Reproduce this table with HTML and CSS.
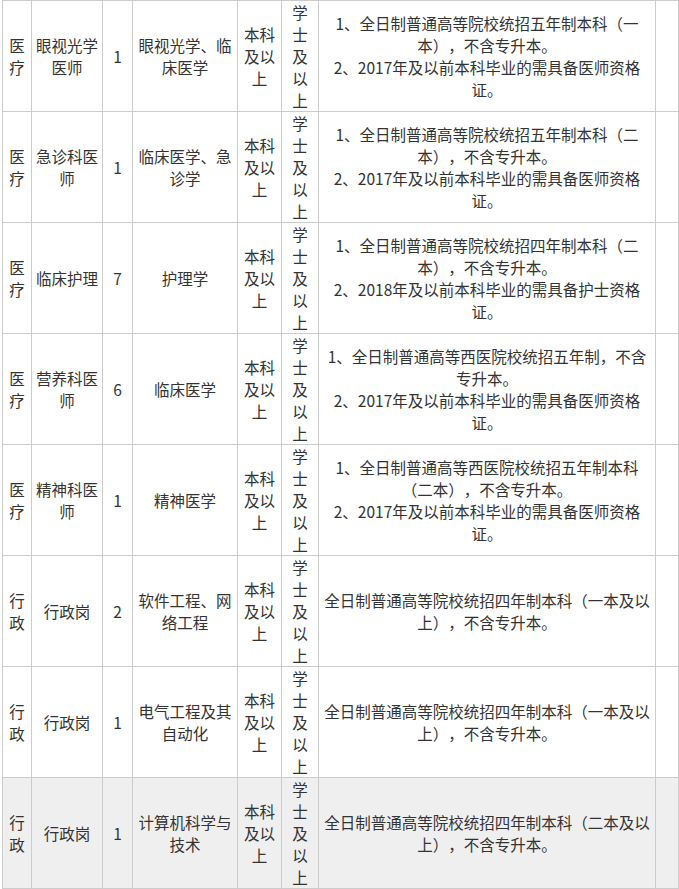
FILE: index.html
```html
<!DOCTYPE html>
<html lang="zh-CN">
<head>
<meta charset="utf-8">
<title>招聘岗位</title>
<link rel="stylesheet" href="styles.css">
</head>
<body>
<div class="table">
  <div class="c">医疗</div><div class="c">眼视光学医师</div><div class="c">1</div><div class="c">眼视光学、临床医学</div><div class="c">本科及以上</div><div class="c">学士及以上</div>
  <div class="c desc"><p>1、全日制普通高等院校统招五年制本科（一本），不含专升本。</p><p>2、2017年及以前本科毕业的需具备医师资格证。</p></div><div class="c"></div>

  <div class="c">医疗</div><div class="c">急诊科医师</div><div class="c">1</div><div class="c">临床医学、急诊学</div><div class="c">本科及以上</div><div class="c">学士及以上</div>
  <div class="c desc"><p>1、全日制普通高等院校统招五年制本科（二本），不含专升本。</p><p>2、2017年及以前本科毕业的需具备医师资格证。</p></div><div class="c"></div>

  <div class="c">医疗</div><div class="c">临床护理</div><div class="c">7</div><div class="c">护理学</div><div class="c">本科及以上</div><div class="c">学士及以上</div>
  <div class="c desc"><p>1、全日制普通高等院校统招四年制本科（二本），不含专升本。</p><p>2、2018年及以前本科毕业的需具备护士资格证。</p></div><div class="c"></div>

  <div class="c">医疗</div><div class="c">营养科医师</div><div class="c">6</div><div class="c">临床医学</div><div class="c">本科及以上</div><div class="c">学士及以上</div>
  <div class="c desc"><p>1、全日制普通高等西医院校统招五年制，不含专升本。</p><p>2、2017年及以前本科毕业的需具备医师资格证。</p></div><div class="c"></div>

  <div class="c">医疗</div><div class="c">精神科医师</div><div class="c">1</div><div class="c">精神医学</div><div class="c">本科及以上</div><div class="c">学士及以上</div>
  <div class="c desc"><p>1、全日制普通高等西医院校统招五年制本科（二本），不含专升本。</p><p>2、2017年及以前本科毕业的需具备医师资格证。</p></div><div class="c"></div>

  <div class="c">行政</div><div class="c">行政岗</div><div class="c">2</div><div class="c">软件工程、网络工程</div><div class="c">本科及以上</div><div class="c">学士及以上</div>
  <div class="c desc"><p>全日制普通高等院校统招四年制本科（一本及以上），不含专升本。</p></div><div class="c"></div>

  <div class="c">行政</div><div class="c">行政岗</div><div class="c">1</div><div class="c">电气工程及其自动化</div><div class="c">本科及以上</div><div class="c">学士及以上</div>
  <div class="c desc"><p>全日制普通高等院校统招四年制本科（一本及以上），不含专升本。</p></div><div class="c"></div>

  <div class="c alt">行政</div><div class="c alt">行政岗</div><div class="c alt">1</div><div class="c alt">计算机科学与技术</div><div class="c alt">本科及以上</div><div class="c alt">学士及以上</div>
  <div class="c alt desc"><p>全日制普通高等院校统招四年制本科（二本及以上），不含专升本。</p></div><div class="c alt"></div>
</div>
</body>
</html>
```

FILE: styles.css
```css
html, body {
  margin: 0;
  padding: 0;
  background: #ffffff;
  overflow: hidden;
}

body {
  padding-left: 2px;
  font-family: "Noto Sans CJK SC", "Noto Sans", sans-serif;
  font-size: 15.5px;
  line-height: 22px;
  color: #333333;
  text-spacing-trim: space-all;
}

.table {
  display: grid;
  grid-template-columns: 28px 70px 29px 104px 43px 36px 336px 22px;
  grid-auto-rows: 110px;
  gap: 1px;
  padding: 1px;
  background: #cccccc;
  width: max-content;
}

.c {
  background: #ffffff;
  display: flex;
  flex-direction: column;
  align-items: center;
  justify-content: center;
  text-align: center;
  padding: 0 3px;
  overflow: hidden;
}

.c.alt {
  background: #efefef;
}

.desc p {
  margin: 0;
}
```
